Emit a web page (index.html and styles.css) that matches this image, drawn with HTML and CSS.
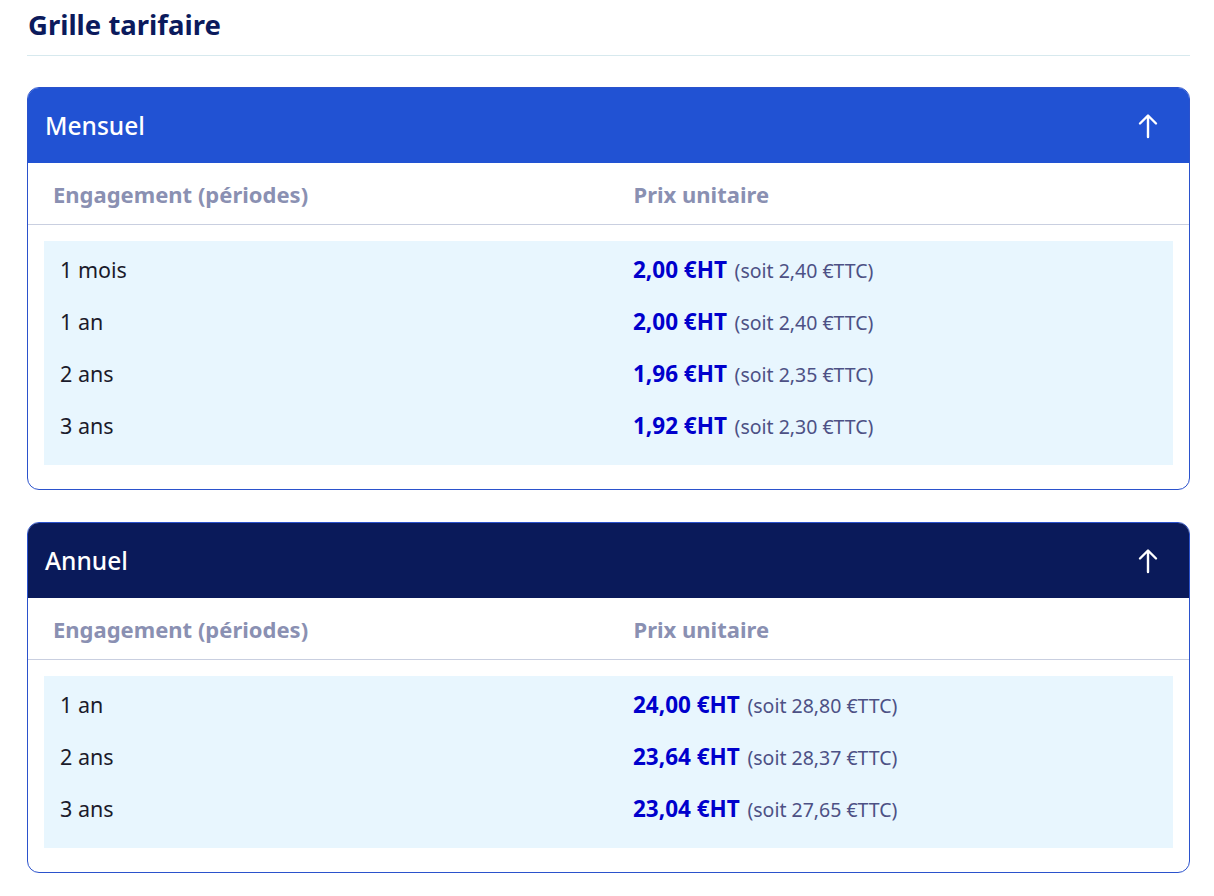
FILE: index.html
```html
<!DOCTYPE html>
<html lang="fr">
<head>
    <meta charset="UTF-8">
    <meta name="viewport" content="width=device-width, initial-scale=1.0">
    <title>Grille tarifaire</title>
    <link rel="stylesheet" href="styles.css">
</head>
<body>
    <h2 class="titre">Grille tarifaire</h2>

    <section class="carte">
        <div class="carte-entete mensuel">
            <span>Mensuel</span>
            <svg class="fleche" width="22" height="26" viewBox="0 0 22 26" fill="none" stroke="#fff" stroke-width="2.4" stroke-linecap="round" stroke-linejoin="round">
                <path d="M11 24V3M3 10.5L11 2.5L19 10.5"/>
            </svg>
        </div>
        <div class="colonnes">
            <div>Engagement (périodes)</div>
            <div>Prix unitaire</div>
        </div>
        <div class="lignes">
            <div class="ligne"><span>1 mois</span><span><b>2,00 €HT</b> <small>(soit 2,40 €TTC)</small></span></div>
            <div class="ligne"><span>1 an</span><span><b>2,00 €HT</b> <small>(soit 2,40 €TTC)</small></span></div>
            <div class="ligne"><span>2 ans</span><span><b>1,96 €HT</b> <small>(soit 2,35 €TTC)</small></span></div>
            <div class="ligne"><span>3 ans</span><span><b>1,92 €HT</b> <small>(soit 2,30 €TTC)</small></span></div>
        </div>
    </section>

    <section class="carte">
        <div class="carte-entete annuel">
            <span>Annuel</span>
            <svg class="fleche" width="22" height="26" viewBox="0 0 22 26" fill="none" stroke="#fff" stroke-width="2.4" stroke-linecap="round" stroke-linejoin="round">
                <path d="M11 24V3M3 10.5L11 2.5L19 10.5"/>
            </svg>
        </div>
        <div class="colonnes">
            <div>Engagement (périodes)</div>
            <div>Prix unitaire</div>
        </div>
        <div class="lignes">
            <div class="ligne"><span>1 an</span><span><b>24,00 €HT</b> <small>(soit 28,80 €TTC)</small></span></div>
            <div class="ligne"><span>2 ans</span><span><b>23,64 €HT</b> <small>(soit 28,37 €TTC)</small></span></div>
            <div class="ligne"><span>3 ans</span><span><b>23,04 €HT</b> <small>(soit 27,65 €TTC)</small></span></div>
        </div>
    </section>
</body>
</html>
```

FILE: styles.css
```css
body {
    font-family: 'Noto Sans', 'Lato', sans-serif;
    margin: 0;
    padding: 0 24px 0 27px;
    background: #fff;
    color: #1b1b2b;
}
.titre {
    margin: 0;
    padding: 7px 0 12px 1px;
    font-size: 27.5px;
    font-weight: 700;
    color: #0b1a5c;
    border-bottom: 1px solid #d7e9ee;
    margin-bottom: 31px;
    line-height: 36px;
}
.carte {
    border: 1px solid #2b52cc;
    border-radius: 12px;
    overflow: hidden;
    margin-bottom: 32px;
    padding-bottom: 24px;
}
.carte-entete {
    display: flex;
    justify-content: space-between;
    align-items: center;
    height: 75px;
    padding: 0 30px 0 17px;
    color: #fff;
    font-size: 24.5px;
    font-weight: 500;
}
.mensuel {
    background: #2152d3;
}
.annuel {
    background: #0a1a5a;
}
.fleche {
    display: block;
    margin-top: 1px;
}
.colonnes {
    display: grid;
    grid-template-columns: 1fr 1fr;
    height: 61px;
    align-items: center;
    border-bottom: 1px solid #c9cfe0;
    color: #8a90b2;
    font-size: 22px;
    font-weight: 700;
}
.colonnes div {
    padding-left: 25px;
}
.lignes {
    margin: 16px 16px 0;
    padding: 2px 16px 14px;
    background: #e8f6fe;
}
.ligne {
    display: grid;
    grid-template-columns: 573px 1fr;
    align-items: center;
    height: 52px;
    font-size: 21.5px;
}
.ligne b {
    color: #0000cc;
    font-size: 22.5px;
    font-weight: 700;
    margin-right: 2px;
}
.ligne small {
    color: #4d5185;
    font-size: 19.5px;
}
```
